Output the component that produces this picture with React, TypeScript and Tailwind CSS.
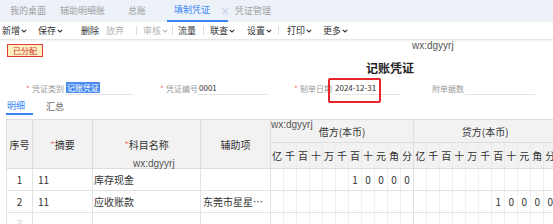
import React from 'react';

const font = { fontFamily: '"Noto Sans CJK SC", "Liberation Sans", sans-serif' };

const tabs = [
  { label: '我的桌面', w: 'w-[60px]', pl: 'pl-[10px]' },
  { label: '辅助明细账', w: 'w-[68px]', pl: 'pl-[0px]' },
  { label: '总账', w: 'w-[39px]', pl: 'pl-[0px]' },
];

const digits = ['亿', '千', '百', '十', '万', '千', '百', '十', '元', '角', '分'];

function Caret() {
  return (
    <svg width="6" height="4" viewBox="0 0 6 4" className="ml-[1px]">
      <path d="M0.8 0.8 L3 3 L5.2 0.8" fill="none" stroke="currentColor" strokeWidth="1.1" />
    </svg>
  );
}

function ToolItem({ label, caret, disabled, w }: { label: string; caret?: boolean; disabled?: boolean; w: string }) {
  return (
    <div className={`${w} flex items-center shrink-0 whitespace-nowrap ${disabled ? 'text-[#b5b5b5]' : 'text-[#333]'}`}>
      <span>{label}</span>
      {caret && <Caret />}
    </div>
  );
}

function Sep({ w }: { w: string }) {
  return (
    <div className={`${w} flex items-center shrink-0`}>
      <div className="w-px h-[9px] bg-[#dcdcdc]" />
    </div>
  );
}

function Field({ label, value, w, valueW, highlight }: { label: string; value?: string; w: string; valueW: string; highlight?: boolean }) {
  return (
    <div className={`${w} flex items-end h-[14px] shrink-0`}>
      <span className="text-[#f06c6c] text-[8px] w-[6px] leading-[12px]">*</span>
      <span className="text-[#9a9a9a] text-[8px] leading-[12px] whitespace-nowrap">{label}</span>
      <div className={`${valueW} ml-auto border-b border-[#e3e3e3] h-[14px] flex items-center text-[8px] text-[#333] whitespace-nowrap`}>
        {value && (highlight ? <span className="bg-[#4a8cf0] text-white px-[1px] leading-[11px]">{value}</span> : <span className="pl-[1px]">{value}</span>)}
      </div>
    </div>
  );
}

type Row = { no: string; summary: string; account: string; aux: string; debit: string[]; credit: string[] };

const emptyDigits = Array(11).fill('');
const amt = ['', '', '', '', '', '', '1', '0', '0', '0', '0'];

const rows: Row[] = [
  { no: '1', summary: '11', account: '库存现金', aux: '', debit: amt, credit: emptyDigits },
  { no: '2', summary: '11', account: '应收账款', aux: '东莞市星星…', debit: emptyDigits, credit: amt },
  { no: '3', summary: '', account: '', aux: '', debit: emptyDigits, credit: emptyDigits },
];

export default function App() {
  return (
    <div className="w-[553px] h-[224px] overflow-hidden bg-white relative" style={font}>
      {/* top tabs */}
      <div className="h-[22px] bg-[#edf2f9] flex items-stretch text-[9px] text-[#a0a0a0] whitespace-nowrap">
        {tabs.map(t => (
          <div key={t.label} className={`${t.w} ${t.pl} flex items-center shrink-0`}>{t.label}</div>
        ))}
        <div className="w-[61px] shrink-0 flex items-center border-b-2 border-[#3a82f6] text-[#3a82f6] pl-[7px]">
          <span>填制凭证</span>
          <span className="ml-[10px] text-[#b7c6dd] text-[10px]">×</span>
        </div>
        <div className="pl-[7px] flex items-center">凭证管理</div>
      </div>

      {/* toolbar */}
      <div className="h-[18px] flex items-center pl-[2px] text-[9px] border-b border-[#e6e6e6] shadow-[0_1px_2px_rgba(0,0,0,0.06)]">
        <ToolItem label="新增" caret w="w-[36px]" />
        <ToolItem label="保存" caret w="w-[43px]" />
        <ToolItem label="删除" w="w-[25px]" />
        <ToolItem label="放弃" disabled w="w-[30px]" />
        <Sep w="w-[7px]" />
        <ToolItem label="审核" caret disabled w="w-[29px]" />
        <Sep w="w-[6px]" />
        <ToolItem label="流量" w="w-[25px]" />
        <Sep w="w-[7px]" />
        <ToolItem label="联查" caret w="w-[37px]" />
        <ToolItem label="设置" caret w="w-[31px]" />
        <Sep w="w-[9px]" />
        <ToolItem label="打印" caret w="w-[36px]" />
        <ToolItem label="更多" caret w="w-[40px]" />
      </div>

      {/* badge + title */}
      <div className="h-[39px] flex flex-col">
        <div className="mt-[4px] ml-[7px] w-[36px] h-[13px] border border-[#e53935] bg-[#fcefc0] text-[#d32f2f] text-[8px] flex items-center justify-center">
          已分配
        </div>
        <div className="mt-[3px] pl-[366px] text-[12px] font-bold text-[#222] leading-[16px]">记账凭证</div>
      </div>
      <div className="absolute left-[412px] top-[38px] text-[10px] text-[#555]" style={{ fontFamily: '"Liberation Sans", sans-serif' }}>wx:dgyyrj</div>

      {/* form row */}
      <div className="h-[20px] flex items-start pt-[2px]">
        <div className="w-[26px] shrink-0" />
        <Field label="凭证类别" value="记账凭证" highlight w="w-[107px]" valueW="w-[67px]" />
        <div className="w-[27px] shrink-0" />
        <Field label="凭证编号" value="0001" w="w-[108px]" valueW="w-[70px]" />
        <div className="w-[26px] shrink-0" />
        <Field label="制单日期" value="2024-12-31" w="w-[106px]" valueW="w-[66px]" />
        <div className="w-[32px] shrink-0" />
        <div className="w-[103px] flex items-end h-[14px] shrink-0">
          <span className="text-[#9a9a9a] text-[8px] leading-[12px] whitespace-nowrap">附单据数</span>
          <div className="ml-auto w-[70px] border-b border-[#e3e3e3] h-[14px]" />
        </div>
      </div>
      <div className="absolute left-[328px] top-[78px] w-[53px] h-[25px] border-2 border-[#e5262a] rounded-[2px]" />

      {/* sub tabs */}
      <div className="h-[16px] flex items-stretch text-[9px]">
        <div className="ml-[6px] w-[27px] border-b-2 border-[#3a82f6] text-[#3a82f6] flex items-center pl-[1px]">明细</div>
        <div className="ml-[13px] text-[#666] flex items-center">汇总</div>
      </div>

      {/* table */}
      <div className="mt-[4px] ml-[6px] relative">
        <table className="border-collapse table-fixed text-[10px] text-[#333]" style={{ width: 550 }}>
          <colgroup>
            <col style={{ width: 26 }} />
            <col style={{ width: 60 }} />
            <col style={{ width: 108 }} />
            <col style={{ width: 70 }} />
            {Array.from({ length: 22 }).map((_, i) => (
              <col key={i} style={{ width: 13 }} />
            ))}
          </colgroup>
          <thead className="bg-[#f2f2f2]">
            <tr className="h-[23px]">
              <th rowSpan={2} className="border border-[#dedede] font-normal">序号</th>
              <th rowSpan={2} className="border border-[#dedede] font-normal"><span className="text-[#f07a7a]">*</span>摘要</th>
              <th rowSpan={2} className="border border-[#dedede] font-normal"><span className="text-[#f07a7a]">*</span>科目名称</th>
              <th rowSpan={2} className="border border-[#dedede] font-normal">辅助项</th>
              <th colSpan={11} className="border border-[#dedede] font-normal">借方(本币)</th>
              <th colSpan={11} className="border border-[#dedede] font-normal">贷方(本币)</th>
            </tr>
            <tr className="h-[26px]">
              {[...digits, ...digits].map((d, i) => (
                <th key={i} className={`border-y border-[#dedede] font-normal text-[10px] ${i === 10 ? 'border-r border-r-[#dedede]' : 'border-r border-r-[#ebebeb]'}`}>{d}</th>
              ))}
            </tr>
          </thead>
          <tbody>
            {rows.map(r => (
              <tr key={r.no} className="h-[22px]">
                <td className={`border border-[#e3e3e3] text-center ${r.no === '3' ? 'text-[#cfcfcf]' : ''}`}>{r.no}</td>
                <td className="border border-[#e3e3e3] pl-[5px]">{r.summary}</td>
                <td className="border border-[#e3e3e3] pl-[1px]">{r.account}</td>
                <td className="border border-[#e3e3e3] pl-[2px] whitespace-nowrap overflow-hidden">{r.aux}</td>
                {[...r.debit, ...r.credit].map((d, i) => (
                  <td key={i} className={`border-y border-[#e3e3e3] text-center ${i === 10 ? 'border-r border-r-[#e0e0e0]' : 'border-r border-r-[#f0f0f0]'}`}>{d}</td>
                ))}
              </tr>
            ))}
          </tbody>
        </table>
        <div className="absolute left-[265px] top-[-2px] text-[10px] text-[#555]" style={{ fontFamily: '"Liberation Sans", sans-serif' }}>wx:dgyyrj</div>
        <div className="absolute left-[127px] top-[37px] text-[10px] text-[#555]" style={{ fontFamily: '"Liberation Sans", sans-serif' }}>wx:dgyyrj</div>
      </div>
    </div>
  );
}
